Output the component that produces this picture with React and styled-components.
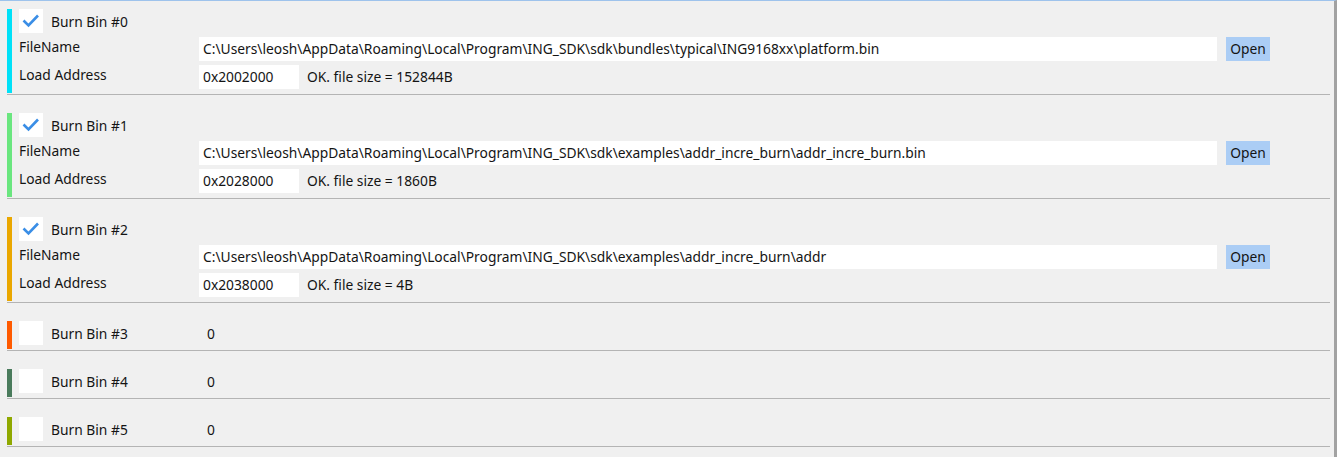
import React from 'react'
import styled, { createGlobalStyle } from 'styled-components'

const GlobalStyle = createGlobalStyle`
  html, body {
    margin: 0;
    padding: 0;
    background: #f0f0f0;
  }
  body {
    font-family: 'Noto Sans', 'Open Sans', sans-serif;
    font-size: 13.8px;
    color: #141414;
  }
`

const Frame = styled.div`
  box-sizing: border-box;
  width: 1337px;
  height: 457px;
  overflow: hidden;
  background: #f0f0f0;
  border-top: 1px solid #9ec3ec;
  border-right: 3px solid #a2a2a2;
  padding: 8px 4px 0 7px;
`

const Section = styled.div`
  display: flex;
  border-bottom: 1px solid #b4b4b4;
  margin-bottom: 18px;
`

const ColorBar = styled.div`
  width: 5px;
  flex-shrink: 0;
  margin-bottom: 1px;
  background: ${p => p.color};
`

const Body = styled.div`
  flex: 1;
  padding: 0 0 5px 7px;
`

const Header = styled.div`
  display: flex;
  align-items: center;
  height: 24px;
`

const CheckBox = styled.div`
  width: 24px;
  height: 24px;
  background: #fff;
  display: flex;
  align-items: center;
  justify-content: center;
  flex-shrink: 0;
`

const Title = styled.span`
  margin-left: 8px;
  width: 148px;
`

const Value = styled.span`
  margin-left: 8px;
`

const Field = styled.div`
  display: flex;
  align-items: flex-start;
  margin-top: 4px;
  height: 24px;
`

const FieldLabel = styled.div`
  width: 180px;
  line-height: 20px;
  flex-shrink: 0;
`

const TextBox = styled.div`
  box-sizing: border-box;
  width: ${p => p.width}px;
  height: 24px;
  background: #fff;
  padding: 0 4px;
  line-height: 24px;
  white-space: nowrap;
  overflow: hidden;
`

const OpenButton = styled.div`
  margin-left: 9px;
  width: 44px;
  height: 24px;
  background: #abcdf5;
  line-height: 24px;
  text-align: center;
`

const Status = styled.span`
  margin-left: 8px;
  line-height: 24px;
`

const Check = () => (
  <svg width="24" height="24" viewBox="0 0 24 24">
    <path d="M4.5 11.5 L9.5 16.5 L19 6.5" fill="none" stroke="#3a8ee6" strokeWidth="2.6" />
  </svg>
)

const bins = [
  { color: '#00e1f8', checked: true, file: 'C:\\Users\\leosh\\AppData\\Roaming\\Local\\Program\\ING_SDK\\sdk\\bundles\\typical\\ING9168xx\\platform.bin', addr: '0x2002000', status: 'OK. file size = 152844B' },
  { color: '#6ae67f', checked: true, file: 'C:\\Users\\leosh\\AppData\\Roaming\\Local\\Program\\ING_SDK\\sdk\\examples\\addr_incre_burn\\addr_incre_burn.bin', addr: '0x2028000', status: 'OK. file size = 1860B' },
  { color: '#eaa700', checked: true, file: 'C:\\Users\\leosh\\AppData\\Roaming\\Local\\Program\\ING_SDK\\sdk\\examples\\addr_incre_burn\\addr', addr: '0x2038000', status: 'OK. file size = 4B' },
  { color: '#ff5a00', checked: false },
  { color: '#4a7b5c', checked: false },
  { color: '#8fa800', checked: false },
]

const BinSection = ({ index, color, checked, file, addr, status }) => (
  <Section>
    <ColorBar color={color} />
    <Body>
      <Header>
        <CheckBox>{checked && <Check />}</CheckBox>
        <Title>Burn Bin #{index}</Title>
        {!checked && <Value>0</Value>}
      </Header>
      {checked && (
        <>
          <Field>
            <FieldLabel>FileName</FieldLabel>
            <TextBox width={1018}>{file}</TextBox>
            <OpenButton>Open</OpenButton>
          </Field>
          <Field>
            <FieldLabel>Load Address</FieldLabel>
            <TextBox width={100}>{addr}</TextBox>
            <Status>{status}</Status>
          </Field>
        </>
      )}
    </Body>
  </Section>
)

const App = () => (
  <>
    <GlobalStyle />
    <Frame>
      {bins.map((bin, i) => (
        <BinSection key={i} index={i} {...bin} />
      ))}
    </Frame>
  </>
)

export default App
